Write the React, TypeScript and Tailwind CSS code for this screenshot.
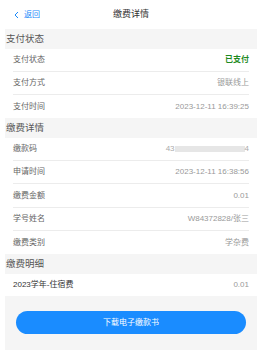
const sections = [
  {
    title: '支付状态',
    rows: [
      { label: '支付状态', value: '已支付', kind: 'paid' },
      { label: '支付方式', value: '银联线上' },
      { label: '支付时间', value: '2023-12-11 16:39:25' },
    ],
  },
  {
    title: '缴费详情',
    rows: [
      { label: '缴款码', value: '', kind: 'masked' },
      { label: '申请时间', value: '2023-12-11 16:38:56' },
      { label: '缴费金额', value: '0.01' },
      { label: '学号姓名', value: 'W84372828/张三' },
      { label: '缴费类别', value: '学杂费' },
    ],
  },
]

type Row = { label: string; value: string; kind?: string }

function DetailRow({ row, last }: { row: Row; last: boolean }) {
  return (
    <div className={`mx-[8px] h-[23.3px] flex items-center justify-between ${last ? '' : 'border-b border-[#ececec]'}`}>
      <span className="text-[8px] text-[#666]">{row.label}</span>
      {row.kind === 'paid' ? (
        <span className="text-[8px] font-bold text-[#1f8a1f]">{row.value}</span>
      ) : row.kind === 'masked' ? (
        <span className="flex items-center text-[8px] text-[#aaa]">
          43
          <span className="w-[70px] h-[6px] bg-[#e6e6e6]" />
          4
        </span>
      ) : (
        <span className="text-[8px] text-[#999]">{row.value}</span>
      )}
    </div>
  )
}

function SectionHeader({ title }: { title: string }) {
  return (
    <div className="h-[19.5px] flex items-center pl-[1px] text-[9.5px] text-[#555]">{title}</div>
  )
}

export default function App() {
  return (
    <div className="w-[262px] h-[354px] bg-white overflow-hidden" style={{ fontFamily: '"Liberation Sans", "Noto Sans CJK SC", sans-serif' }}>
      <div className="relative h-[29px] flex items-center justify-center">
        <div className="absolute left-[14px] top-0 h-full flex items-center gap-[5px] text-[#1989fa]">
          <svg width="5" height="8" viewBox="0 0 5 8" fill="none">
            <path d="M4 1L1 4L4 7" stroke="#1989fa" strokeWidth="1" />
          </svg>
          <span className="text-[8px]">返回</span>
        </div>
        <span className="text-[9px] text-[#333]">缴费详情</span>
      </div>

      <div className="mx-[5px] bg-[#f5f5f5] pb-[16px]">
        {sections.map(s => (
          <div key={s.title}>
            <SectionHeader title={s.title} />
            <div className="bg-white">
              {s.rows.map((r, i) => (
                <DetailRow key={r.label} row={r} last={i === s.rows.length - 1} />
              ))}
            </div>
          </div>
        ))}

        <SectionHeader title="缴费明细" />
        <div className="bg-white h-[22px] px-[8px] flex items-center justify-between">
          <span className="text-[8px] text-[#333]">2023学年-住宿费</span>
          <span className="text-[8px] text-[#999]">0.01</span>
        </div>

        <div className="px-[11px] pt-[12px]">
          <button className="w-full h-[23px] rounded-full bg-[#1a8cff] text-white text-[8px]">
            下载电子缴款书
          </button>
        </div>
      </div>
    </div>
  )
}
